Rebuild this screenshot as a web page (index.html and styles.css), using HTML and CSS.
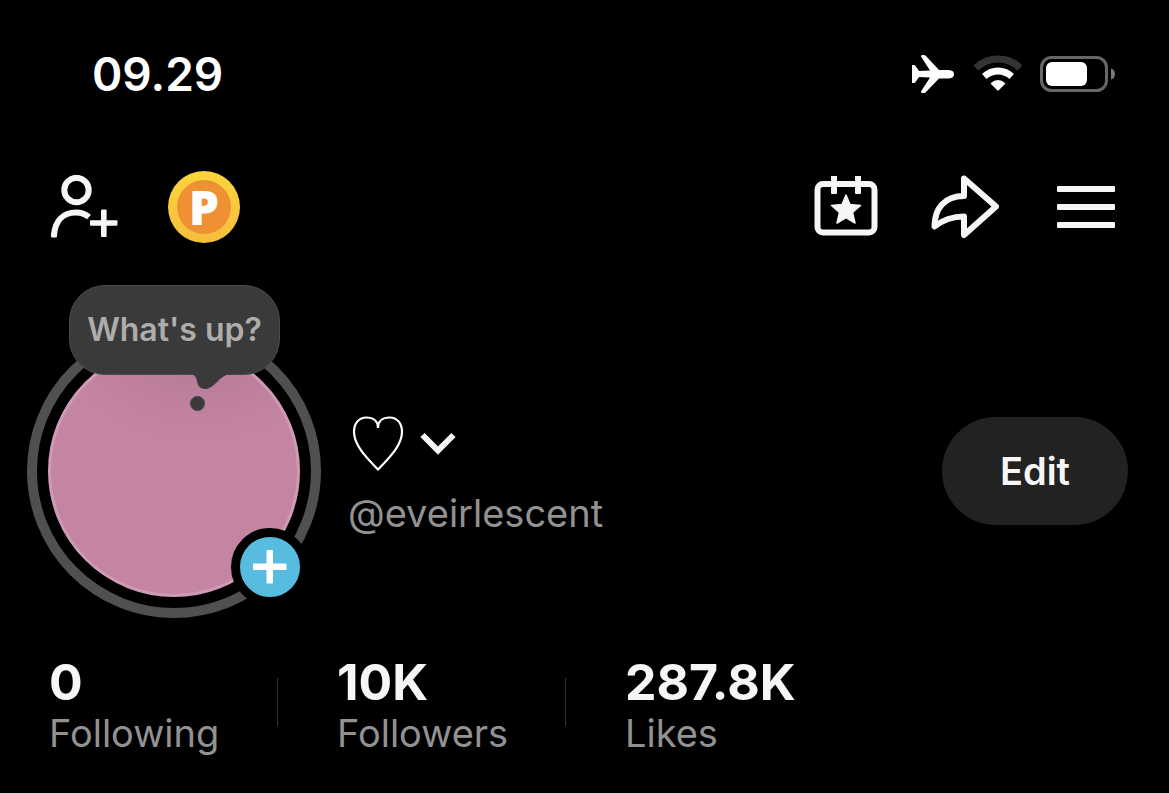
FILE: index.html
```html
<!DOCTYPE html>
<html lang="en">
<head>
    <meta charset="UTF-8">
    <meta name="viewport" content="width=device-width, initial-scale=1.0">
    <title>Profile</title>
    <link rel="stylesheet" href="styles.css">
</head>
<body>

    <!-- status bar -->
    <div class="status-bar">
        <time class="clock">09.29</time>
        <div class="status-icons">
            <svg width="44" height="40" viewBox="0 0 44 40" fill="#fff" role="img" aria-label="Airplane mode">
                <path d="M0 11h2q1 0 1.500 1l3.500 5 11 -.5L9 2.500Q9 1 10 1h2q1 0 2 1L27 16h10q5 .5 5 4.200T37 24.500H27L14 38q-1 1-2 1h-2q-1 0-1-1.500l9-14-11-.5-3.500 5q-.5 1-1.500 1H0z"/>
            </svg>
            <svg width="50" height="40" viewBox="0 0 50 40" role="img" aria-label="Wi-Fi">
                <path d="M1.500 12.500Q.5 11.500 1.500 10.500Q11 1.500 25 1.500T48.500 10.500Q49.500 11.500 48.500 12.500L44.500 16.500Q36 8.500 25 8.500T5.500 16.500z" fill="#333"/>
                <path d="M9.500 20.500Q9 20 9.500 19.500Q16 13.500 25 13.500T40.500 19.500Q41 20 40.500 20.500L36.500 25Q31.500 20.500 25 20.500T13.500 25z" fill="#fff"/>
                <path d="M18 30q-.5-.5 0-1Q21 26 25 26t7 3q.5.500 0 1L26 36q-1 1-2 0z" fill="#fff"/>
            </svg>
            <svg width="76" height="36" viewBox="0 0 76 36" role="img" aria-label="Battery">
                <rect x="1.500" y="1.500" width="65" height="33" rx="10" fill="none" stroke="#666" stroke-width="3"/>
                <rect x="6" y="6" width="41" height="24" rx="6" fill="#fff"/>
                <path d="M71 12.500q4 1 4 5.500t-4 5.500z" fill="#777"/>
            </svg>
        </div>
    </div>

    <!-- top navigation -->
    <header class="top-nav">
        <div class="nav-left">
            <button class="icon-btn" aria-label="Add friends">
                <svg width="68" height="64" viewBox="0 0 68 64" fill="none" stroke="#f6f6f6" stroke-width="6" stroke-linejoin="round">
                    <circle cx="25.500" cy="15" r="12.200"/>
                    <path d="M3 60.500C4 46 12 37.500 25 37.500q7.500 0 13 4.500"/>
                    <path d="M0 58h6v3.500q0 1-1 1H1q-1 0-1-1z" fill="#f6f6f6" stroke="none"/>
                    <rect x="39" y="45.200" width="27.500" height="5.600" rx="1" fill="#f6f6f6" stroke="none"/>
                    <rect x="50" y="34.500" width="5.600" height="27.500" rx="1" fill="#f6f6f6" stroke="none"/>
                </svg>
            </button>
            <button class="icon-btn coin" aria-label="Rewards"><span class="coin-face">P</span></button>
        </div>
        <div class="nav-right">
            <button class="icon-btn" aria-label="Events">
                <svg width="64" height="62" viewBox="0 0 64 62" fill="none" stroke="#f6f6f6" stroke-width="6">
                    <rect x="3.500" y="8" width="57" height="48.500" rx="5.500"/>
                    <rect x="17" y="-.5" width="6" height="18.500" rx="1" fill="#f6f6f6" stroke="none"/>
                    <rect x="41" y="-.5" width="6" height="18.500" rx="1" fill="#f6f6f6" stroke="none"/>
                    <path d="M32 19l4 9.500 10.500 1-8 7 2.500 10.500-9-5.500-9 5.500 2.500-10.500-8-7 10.500-1z" fill="#f6f6f6" stroke-width="1.500" stroke-linejoin="round"/>
                </svg>
            </button>
            <button class="icon-btn" aria-label="Share">
                <svg width="68" height="64" viewBox="0 0 68 64" fill="none" stroke="#f6f6f6" stroke-width="6" stroke-linejoin="round">
                    <path d="M33 3.500L65 31.500 33 60V41.500Q16 41.500 3.500 51.500C3.500 34 13 21 33 21z"/>
                </svg>
            </button>
            <button class="icon-btn menu" aria-label="Menu">
                <svg width="58" height="42" viewBox="0 0 58 42" fill="#f6f6f6">
                    <rect width="58" height="6" rx="1"/>
                    <rect y="18" width="58" height="6" rx="1"/>
                    <rect y="36" width="58" height="6" rx="1"/>
                </svg>
            </button>
        </div>
    </header>

    <!-- avatar, name and edit button -->
    <main>
        <section class="profile">
            <div class="avatar-ring">
                <div class="avatar"></div>
                <button class="bubble">What's up?
                    <svg class="bubble-tail" width="52" height="46" viewBox="0 0 52 46" aria-hidden="true">
                        <path d="M6 0q5 1 6 7 1 8 8 8 5 0 11-6 8-9 15-9z" fill="#3a3a3a"/>
                        <circle cx="12.500" cy="29.500" r="7.200" fill="#3a3a3a" stroke="#555" stroke-width="1"/>
                    </svg>
                </button>
                <button class="add-story" aria-label="Add story">
                    <svg width="34" height="34" viewBox="0 0 34 34" fill="#fff">
                        <rect y="13.500" width="33.500" height="6.500" rx="1"/>
                        <rect x="13.500" y="0" width="6.500" height="33.500" rx="1"/>
                    </svg>
                </button>
            </div>
            <div class="identity">
                <button class="name" aria-label="Switch account">
                    <svg width="52" height="58" viewBox="0 0 52 58" fill="none" stroke="#fff" stroke-width="2.200">
                        <path d="M26 13C26 6 21 2.500 14.500 2.500 7 2.500 2 8 2 17c0 13 12 25 24 37.500C38 42 50 30 50 17 50 8 45 2.500 37.500 2.500 31 2.500 26 6 26 13z"/>
                    </svg>
                    <svg width="36" height="24" viewBox="0 0 36 24" fill="none" stroke="#f6f6f6" stroke-width="6">
                        <path d="M2.500 3L18 18.500 33.500 3"/>
                    </svg>
                </button>
                <p class="handle">@eveirlescent</p>
            </div>
            <button class="edit-btn">Edit</button>
        </section>

        <ul class="stats">
            <li><a href="#following"><strong>0</strong><span>Following</span></a></li>
            <li><a href="#followers"><strong>10K</strong><span>Followers</span></a></li>
            <li><a href="#likes"><strong>287.8K</strong><span>Likes</span></a></li>
        </ul>
    </main>

</body>
</html>
```
FILE: styles.css
```css
* { box-sizing: border-box; }
body { margin: 0; background: #000; color: #f6f6f6; font-family: Inter, "Liberation Sans", sans-serif; }
button { padding: 0; border: 0; background: none; color: inherit; font: inherit; cursor: pointer; }
svg { display: block; flex: none; }

/* status bar */
.status-bar { display: flex; justify-content: space-between; align-items: center; padding: 44px 53px 0 92px; }
.clock { font-size: 46px; line-height: 60px; font-weight: 600; color: #fff; }
.status-icons { display: flex; align-items: center; gap: 17px; }

/* top navigation */
.top-nav { display: flex; justify-content: space-between; align-items: center; padding: 67px 54px 0 51px; }
.nav-left, .nav-right { display: flex; align-items: center; }
.nav-left { gap: 49px; }
.nav-right { gap: 53px; }
.icon-btn { display: flex; align-items: center; justify-content: center; }
.menu { margin-left: 5px; }
.coin { width: 72px; height: 72px; border-radius: 50%; background: linear-gradient(#fbd53b, #f5bd3f); }
.coin-face { width: 54px; height: 54px; border-radius: 50%; background: #ee9033; color: #fff;
             font-family: "Open Sans", sans-serif; font-size: 48px; line-height: 54px; font-weight: 800; }

/* profile */
.profile { display: flex; align-items: center; padding: 81px 41px 0 27px; }
.avatar-ring { position: relative; flex: none; width: 294px; height: 294px; padding: 11px; border: 10px solid #505050; border-radius: 50%; }
.avatar { height: 100%; border: 3px solid #cf9ab5; border-radius: 50%;
          background: radial-gradient(ellipse 130px 90px at 60% 0, #b47895, #c485a3); }
.bubble { position: absolute; left: 32px; top: -49px; width: 211px; height: 90px; border: 1px solid #4c4c4c; border-radius: 36px;
          background: #3a3a3a; color: #adadad; font-size: 32px; line-height: 88px; font-weight: 600; white-space: nowrap; }
.bubble-tail { position: absolute; left: 115px; top: 88px; }
.add-story { position: absolute; right: 2px; bottom: 2px; width: 78px; height: 78px; display: flex; align-items: center; justify-content: center;
             border: 9px solid #000; border-radius: 50%; background: #58bbe0; }
.identity { flex: 1; padding: 10px 0 0 27px; }
.name { display: flex; align-items: center; gap: 16px; padding-left: 4px; }
.handle { margin: 16px 0 0; color: #929292; font-size: 38px; line-height: 48px; }
.edit-btn { width: 186px; height: 108px; border-radius: 54px; background: #222; font-size: 38px; font-weight: 600; }

/* counters */
.stats { display: flex; margin: 0; padding: 36px 49px 0; list-style: none; }
.stats li { display: flex; align-items: center; }
.stats li:not(:last-child) { width: 288px; }
.stats li:not(:last-child)::after { content: ""; width: 1px; height: 48px; margin: 0 59px 6px auto; background: #303030; }
.stats a { display: block; color: inherit; text-decoration: none; }
.stats strong, .stats span { display: block; }
.stats strong { font-size: 50px; line-height: 56px; font-weight: 700; }
.stats span { color: #929292; font-size: 38px; line-height: 46px; }
```
